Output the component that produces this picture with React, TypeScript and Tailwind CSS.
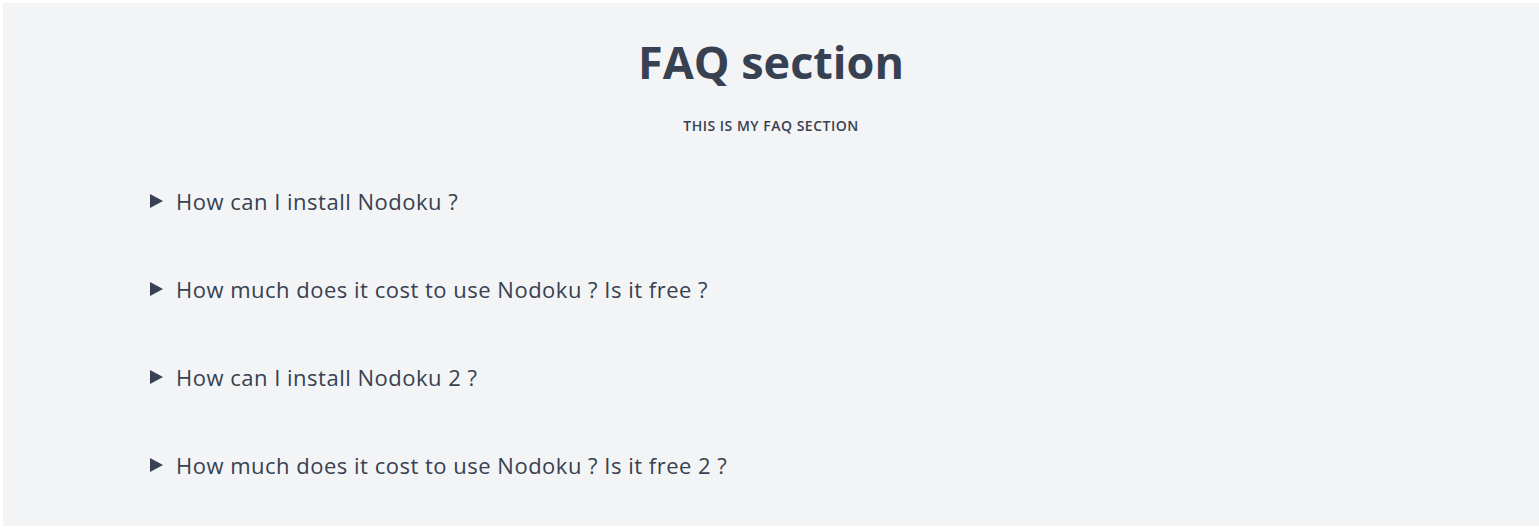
import React from 'react';

const faqs = [
    'How can I install Nodoku ?',
    'How much does it cost to use Nodoku ? Is it free ?',
    'How can I install Nodoku 2 ?',
    'How much does it cost to use Nodoku ? Is it free 2 ?',
];

export default function App() {
    return (
        <div className="min-h-[529px] bg-white pl-[3px] pt-[3px] pb-[3px] font-['Open_Sans',sans-serif] text-[#374151]">
            <section className="h-[523px] bg-[#f3f4f6]">
                <div className="flex flex-col items-center pt-[30px]">
                    <h1 className="text-[45px] font-bold leading-[58px]">FAQ section</h1>
                    <p className="mt-[24px] text-[14px] leading-[21px] font-semibold uppercase tracking-[0.5px]">This is my FAQ section</p>
                </div>

                <div className="mt-[51px] pl-[147px] flex flex-col gap-[60px]">
                    {faqs.map((q) => (
                        <details key={q}>
                            <summary className="flex h-[28px] cursor-pointer list-none items-center gap-[13px] text-[22px] tracking-[0.5px] [&::-webkit-details-marker]:hidden">
                                <svg width="13" height="14" viewBox="0 0 13 14" className="shrink-0">
                                    <path d="M0 0 L13 7 L0 14 Z" fill="#374151" />
                                </svg>
                                <span>{q}</span>
                            </summary>
                        </details>
                    ))}
                </div>
            </section>
        </div>
    );
}
